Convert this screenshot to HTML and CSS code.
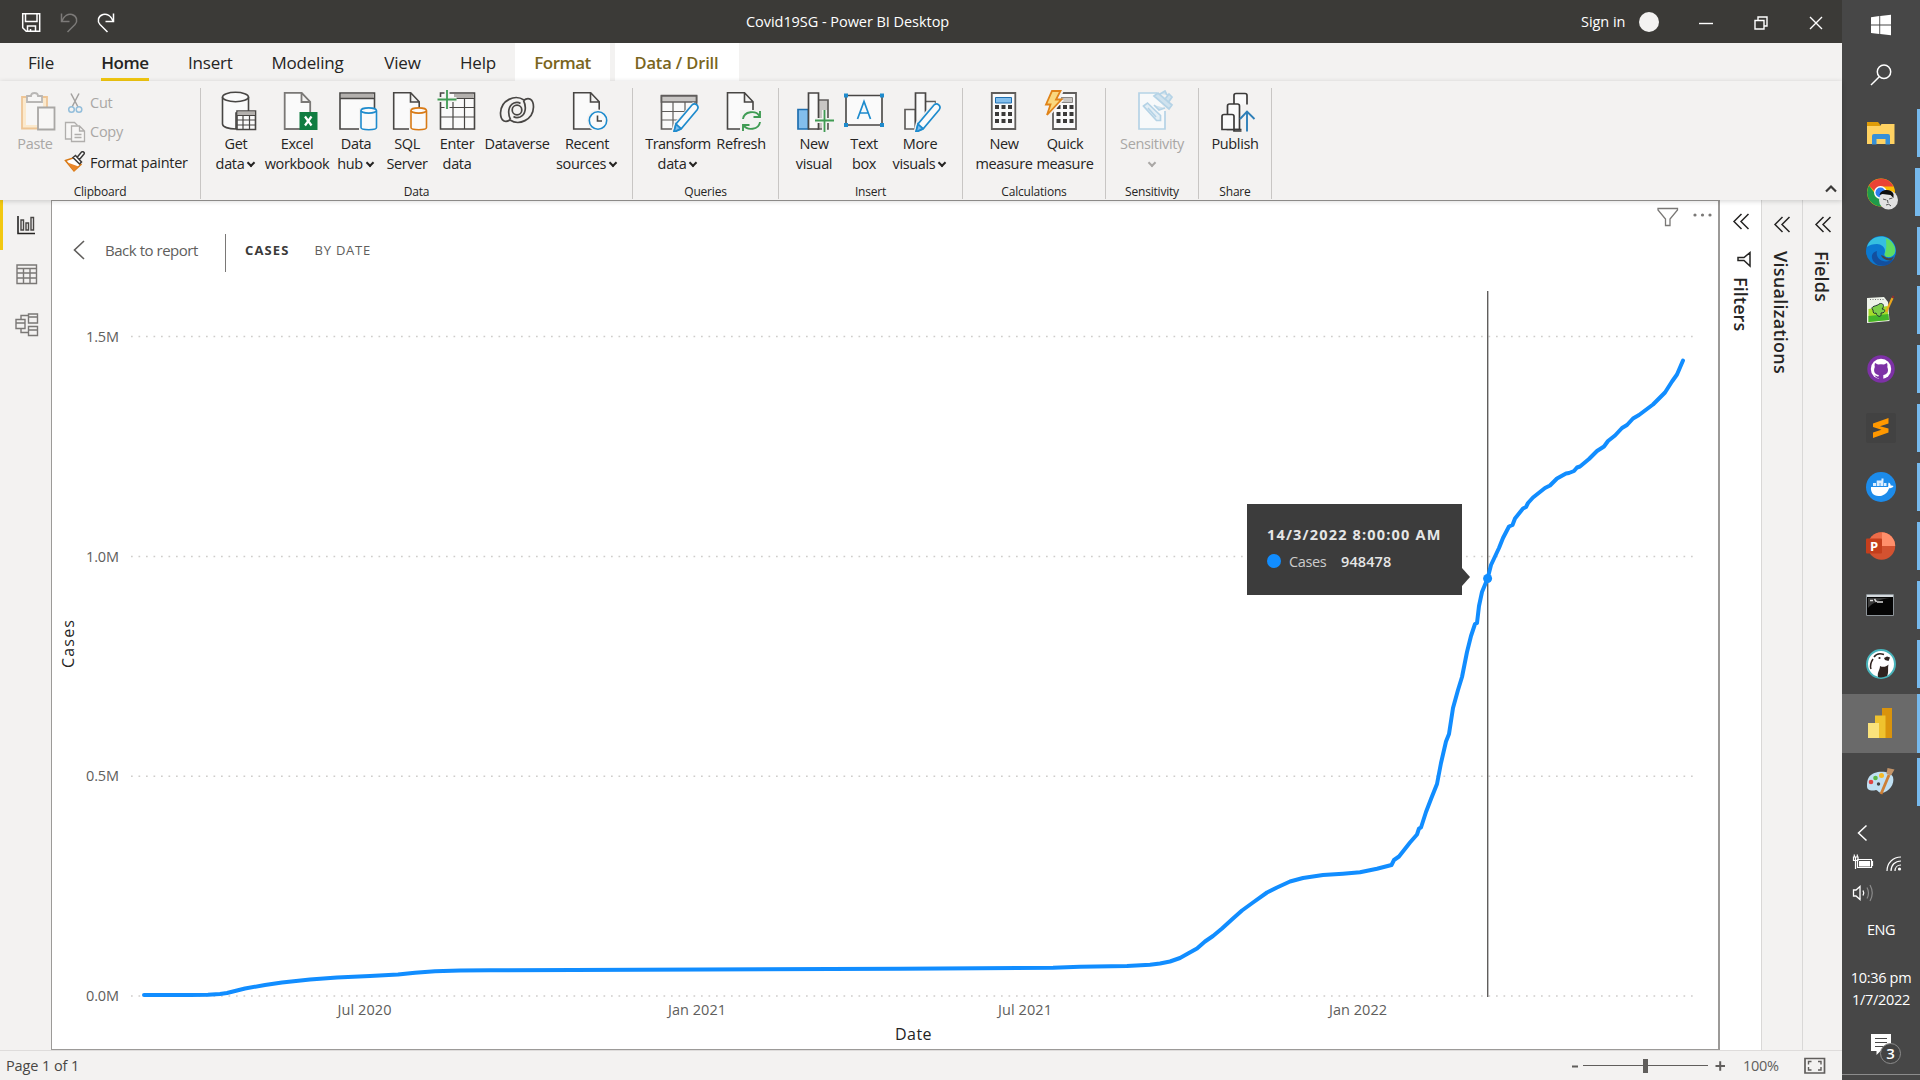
FILE: index.html
```html
<!DOCTYPE html>
<html lang="en">
<head>
<meta charset="utf-8">
<title>Covid19SG - Power BI Desktop</title>
<link rel="stylesheet" href="styles.css">
</head>
<body>
<div class="desktop">
<div class="app">
  <header class="titlebar">
    <svg class="quick" width="120" height="43" viewBox="0 0 120 43" fill="none" stroke="#fff" stroke-width="1.5">
      <path d="M22.7 13.7h17v17.6h-13.500l-3.500-3.500zM25.500 14v7.500h11.500v-7.500M27.500 31v-5h8v5M30.500 31v-2"/>
      <path stroke="#7c7a78" d="M61.500 13.500v8h8M62 21c2-5 6-7.500 10-6.500 5 1.500 6 6.500 3 10l-7.500 7.500"/>
      <path d="M113.500 13.500v8h-8M113 21c-2-5-6-7.500-10-6.500-5 1.500-6 6.500-3 10l7.500 7.500"/>
    </svg>
    <div class="app-title">Covid19SG - Power BI Desktop</div>
    <div class="account"><span>Sign in</span><i class="avatar"></i></div>
    <svg class="winctl" width="142" height="43" viewBox="1700 0 142 43" fill="none" stroke="#fff" stroke-width="1.4">
      <path d="M1699 23.500h14"/><path d="M1755 20.500h9v8.500h-9zM1758 20v-3h9v9h-3"/><path d="M1810 17l12 12M1822 17l-12 12"/>
    </svg>
  </header>

  <nav class="tabs">
    <span class="tab t-file">File</span><span class="tab t-home active">Home</span><span class="tab t-insert">Insert</span><span class="tab t-model">Modeling</span><span class="tab t-view">View</span><span class="tab t-help">Help</span><span class="tab ctx t-format">Format</span><span class="tab ctx t-drill">Data / Drill</span>
  </nav>

  <section class="ribbon">
    <div class="group g-clip">
      <div class="tools">
        <div class="btn w-paste off">
          <svg viewBox="13 90 44 42" fill="none" stroke-width="1.8"><path d="M22 97h25v31.500H22z" fill="#fbe9cd" stroke="#eec595"/><path d="M26 101h17v24H26z" fill="#f7f6f5" stroke="none"/><path d="M27 102v-6h4c0-4 7-4 7 0h4v6z" fill="#f7f6f5" stroke="#b9b7b5"/><path d="M38 107.500h16.500v22H38z" fill="#f7f6f5" stroke="#a9a7a5"/></svg>
          <span>Paste</span>
        </div>
        <div class="list">
          <div class="row off"><svg viewBox="64 92 22 22" fill="none"><path d="M71 93.500l7 13.500M79 93.500l-7 13.500" stroke="#a3a19f" stroke-width="1.5"/><circle cx="71.500" cy="109.500" r="2.800" stroke="#93bedb" stroke-width="1.500"/><circle cx="79" cy="109.500" r="2.800" stroke="#93bedb" stroke-width="1.500"/></svg><span>Cut</span></div>
          <div class="row off"><svg viewBox="64 122 22 22" fill="#f7f6f5" stroke="#b0aeac" stroke-width="1.300"><path d="M73 140h-7.500v-16.500h9l3 3"/><path d="M71.500 127h8l5 5v10.500h-13zM79.500 127v5h5M74.500 135.500h7M74.500 138.500h7"/></svg><span>Copy</span></div>
          <div class="row"><svg viewBox="64 152 22 22" stroke-width="1.500"><path d="M65.500 161.500l9-3 6.500 7-7 6.500z" fill="#fff" stroke="#d87a16"/><path d="M67.500 163.500l11 4-4.500 4.500z" fill="#e8862a" stroke="none"/><path d="M73 158.500l2.500-2 6 6.500-2 2zM77 158.500l4.500-5.500c1.500-1 3.500.5 2.500 2l-5 6" fill="#fff" stroke="#3b3a39"/></svg><span>Format painter</span></div>
        </div>
      </div>
      <div class="caption">Clipboard</div>
    </div>

    <div class="group g-data">
      <div class="tools">
        <div class="btn w52"><svg viewBox="214 90 44 42" fill="#fafafa" stroke="#484644" stroke-width="1.600"><path d="M222.500 97v27c0 3 6 5 13.500 5V113h12.500V97"/><ellipse cx="235.500" cy="97" rx="13" ry="4.700"/><path d="M237 111h18.500v18.500H237z"/><path d="M237.500 111.500h17.500v3.500h-17.500z" fill="#b3b0ad" stroke="none"/><path d="M237 115.500h18.500M237 120h18.500M237 125h18.500M243 115.500v14M249.500 115.500v14" stroke-width="1.200"/></svg><span>Get</span><span>data<i class="car"></i></span></div>
        <div class="btn w70"><svg viewBox="275 90 44 42" fill="#fafafa" stroke="#7a7876" stroke-width="1.800"><path d="M284.700 92.800h17l8.500 9V129h-25.500zM301.500 93v9h8.500"/><path d="M299.500 112h18v18h-18z" fill="#107c41" stroke="none"/><path d="M305 116.500l6.500 9M311.500 116.500l-6.500 9" stroke="#fff" stroke-width="2.200"/></svg><span>Excel</span><span>workbook</span></div>
        <div class="btn w48"><svg viewBox="334 90 44 42" fill="#fafafa" stroke="#484644" stroke-width="1.600"><path d="M340 93h34.500v36H340z"/><path d="M341 94h32.500v4H341z" fill="#b3b0ad" stroke="none"/><path d="M340 98.500h34.500"/><path d="M359 108h20v24h-20z" fill="#f3f2f1" stroke="none"/><path d="M361 110.500v17c0 3 15.500 3 15.500 0v-17" stroke="#1e8bcd"/><ellipse cx="368.700" cy="110.500" rx="7.700" ry="2.600" stroke="#1e8bcd"/></svg><span>Data</span><span>hub<i class="car"></i></span></div>
        <div class="btn w54"><svg viewBox="385 90 44 42" fill="#fafafa" stroke="#484644" stroke-width="1.600"><path d="M393.700 92.800h17l8.500 9V129h-25.500zM410.500 93v9h8.500"/><path d="M409 108h20v24h-20z" fill="#f3f2f1" stroke="none"/><path d="M411 110.500v17c0 3 15.500 3 15.500 0v-17" stroke="#d87a16"/><ellipse cx="418.700" cy="110.500" rx="7.700" ry="2.600" stroke="#d87a16"/></svg><span>SQL</span><span>Server</span></div>
        <div class="btn w46"><svg viewBox="435 90 44 42" fill="#fafafa" stroke="#484644" stroke-width="1.600"><path d="M440.500 93h34v36h-34z"/><path d="M454 94h19.500v4H454z" fill="#b3b0ad" stroke="none"/><path d="M440.500 107.500h34M440.500 117h34M453 99v30M464.500 99v30M453 98.500h21.500" stroke-width="1.200"/><path d="M447 90v19M437.500 99.500h19" stroke="#f3f2f1" stroke-width="5"/><path d="M447 90v19M437.500 99.500h19" stroke="#3f9b53" stroke-width="1.800"/></svg><span>Enter</span><span>data</span></div>
        <div class="btn w74"><svg viewBox="495 90 44 42" fill="none" stroke="#484644" stroke-width="1.700"><circle cx="517" cy="110" r="4.800"/><path d="M524 100c-9-6-23 0-23.500 13 0 8 5 10.500 10 6.500M510 120c9 6 23 0 23.500-13 0-8-5-10.500-10-6.500"/><path d="M510.500 119.500c-3-6-2.500-14 3.500-16.500 3-1 5-.5 6.500.5M523.500 100.500c3 6 2.500 14-3.500 16.500-3 1-5 .5-6.500-.5"/></svg><span>Dataverse</span></div>
        <div class="btn w66"><svg viewBox="565 90 44 42" fill="#fafafa" stroke="#484644" stroke-width="1.600"><path d="M573.700 92.800h17l8.500 9V129h-25.500zM590.500 93v9h8.500"/><circle cx="598" cy="120.500" r="11" fill="#f3f2f1" stroke="none"/><circle cx="598" cy="120.500" r="8.700" stroke="#1e8bcd"/><path d="M597.500 115.500v5.500h4.500"/></svg><span>Recent</span><span>sources<i class="car"></i></span></div>
      </div>
      <div class="caption">Data</div>
    </div>

    <div class="group g-query">
      <div class="tools">
        <div class="btn w72 tight"><svg viewBox="656 90 44 42" fill="#fafafa" stroke="#605e5c" stroke-width="1.700"><path d="M661.500 96.500h35V130h-35z" transform="translate(0 -1)"/><path d="M661.500 96h35v6h-35z" fill="#c8c6c4"/><path d="M661.500 111.500h35M661.500 120h35M673 102v27M685 102v27" stroke-width="1.200"/><path d="M670 135l4-12 19-21 8 6v24z" fill="#f3f2f1" stroke="none"/><path d="M674 132l2-8 16-19c3-3 8 1 5 5l-16 19z" stroke="#1e8bcd"/><path d="M674 132l2-8 5 4.500z" fill="#83beec" stroke="#1e8bcd"/></svg><span>Transform</span><span>data<i class="car"></i></span></div>
        <div class="btn w54"><svg viewBox="719 90 44 42" fill="#fafafa" stroke="#484644" stroke-width="1.600"><path d="M727.500 92.800h17l8.500 9V129h-25.500zM744.500 93v9h8.500"/><path d="M740 110h23v22h-23z" fill="#f3f2f1" stroke="none"/><path d="M743 119c1-8 13-9 16.500-3M760 111v6h-6.500M760 122c-1 8-13 9-16.500 3M743 131v-6h6.500" fill="none" stroke="#3f9b53" stroke-width="1.900"/></svg><span>Refresh</span></div>
      </div>
      <div class="caption">Queries</div>
    </div>

    <div class="group g-insert">
      <div class="tools">
        <div class="btn w50"><svg viewBox="792 90 44 42" fill="#fafafa" stroke="#605e5c" stroke-width="1.700"><path d="M818 100h10v29h-10z" fill="#c8c6c4"/><path d="M798 109.500h10.500V129H798z" fill="#83beec" stroke="#1e6fb0"/><path d="M808.500 93h10v36h-10z" stroke="#484644"/><path d="M824.500 110v22M815 120.500h19" stroke="#f3f2f1" stroke-width="5"/><path d="M824.500 110v22M815 120.500h19" stroke="#3f9b53" stroke-width="1.800"/></svg><span>New</span><span>visual</span></div>
        <div class="btn w50"><svg viewBox="842 90 44 42" fill="#fafafa" stroke="#484644" stroke-width="1.600"><path d="M846 95.500h36v29.500h-36z"/><path d="M844 93.500h4v4h-4zM880 93.500h4v4h-4zM844 123h4v4h-4zM880 123h4v4h-4z" fill="#1e8bcd" stroke="none"/><path d="M857.500 119l6.500-17.500 6.500 17.500M859.500 113h9" fill="none" stroke="#1e8bcd" stroke-width="1.700"/></svg><span>Text</span><span>box</span></div>
        <div class="btn w62"><svg viewBox="898 90 44 42" fill="#fafafa" stroke="#605e5c" stroke-width="1.700"><path d="M925 101.500h10V129h-10z"/><path d="M905 109.500h10.500V129H905z"/><path d="M915.500 93h10v36h-10z" stroke="#484644"/><path d="M913 134l3-12 18-20 8 6v24z" fill="#f3f2f1" stroke="none"/><path d="M916 132l2-8 16-19c3-3 8 1 5 5l-16 19z" stroke="#1e8bcd"/><path d="M916 132l2-8 5 4.500z" fill="#83beec" stroke="#1e8bcd"/></svg><span>More</span><span>visuals<i class="car"></i></span></div>
      </div>
      <div class="caption">Insert</div>
    </div>

    <div class="group g-calc">
      <div class="tools">
        <div class="btn w62"><svg viewBox="982 90 44 42" fill="#fafafa" stroke="#605e5c" stroke-width="1.800"><path d="M991.800 93h23.500v36h-23.500z"/><path d="M995.500 97.500h16v5.500h-16z" fill="#83beec" stroke="#1e6fb0" stroke-width="1"/><path d="M995 107h17M995 114h17M995 121h17" stroke="#3b3a39" stroke-width="4" stroke-dasharray="4 2.500"/></svg><span>New</span><span>measure</span></div>
        <div class="btn w60"><svg viewBox="1043 90 44 42" fill="#fafafa" stroke="#605e5c" stroke-width="1.800"><path d="M1053 93h23v36h-23z"/><path d="M1061 97.500h11.500v5h-11.500z" fill="#c8c6c4" stroke="#8a8886" stroke-width="1"/><path d="M1056.500 107h17M1056.500 114h17M1056.500 121h17" stroke="#3b3a39" stroke-width="4" stroke-dasharray="4 2.500"/><path d="M1051 90h13l-4 10h4l-15 17h-5v-30z" fill="#f3f2f1" stroke="none"/><path d="M1052 91h8.500l-4.500 8.500h5.500L1047 115l3.500-10.500H1046z" fill="#fad87e" stroke="#e08318"/></svg><span>Quick</span><span>measure</span></div>
      </div>
      <div class="caption">Calculations</div>
    </div>

    <div class="group g-sens">
      <div class="tools">
        <div class="btn w72 off"><svg viewBox="1130 90 44 42" fill="#f7f9fa" stroke="#b5d3e6" stroke-width="1.700"><path d="M1157 93h-18v36h26v-18"/><path d="M1143.500 106l4-3 13 12.500v5h-4z" fill="#e3eef5"/><path d="M1148 108l8 9" /><path d="M1154 96l4-3 14 12-3 4zM1160 94l5-3 2 4M1165 99l4-5 3 3-4 6M1154 105l5 5 6-2" fill="#cfe2ee"/></svg><span>Sensitivity</span><span><i class="car"></i></span></div>
      </div>
      <div class="caption">Sensitivity</div>
    </div>

    <div class="group g-share">
      <div class="tools">
        <div class="btn w52"><svg viewBox="1213 89 44 42" fill="#fafafa" stroke="#3b3a39" stroke-width="1.700"><path d="M1234 104v-9.500q0-2 2-2h9q2 0 2 2v35.500h-13z" stroke-width="1.700"/><path d="M1227.500 113v-8q0-2 2-2h8q2 0 2 2v23.500h-12z"/><path d="M1222 128.500v-13q0-2 2-2h8q2 0 2 2v13zM1234 128.500h9"/><path d="M1241.500 131v-27.500h14v27.500z" fill="#f3f2f1" stroke="none"/><path d="M1247 130.500v-18.500M1240 118l7-7.500 7.500 7.500" fill="none" stroke="#2e7fb8" stroke-width="1.900"/></svg><span>Publish</span></div>
      </div>
      <div class="caption">Share</div>
    </div>
    <svg class="collapse" width="14" height="9" viewBox="0 0 14 9" fill="none" stroke="#3b3a39" stroke-width="2.200"><path d="M2 7.500l5-5 5 5"/></svg>
  </section>

  <main class="workspace">
    <aside class="rail">
      <svg width="51" height="150" viewBox="0 200 51 150" fill="none" stroke="#7a7876" stroke-width="1.400">
        <path d="M18 216v17.500h17" stroke="#252423" stroke-width="1.600"/><path d="M21 220h2.500v10H21zM26 223h2.500v7H26zM31 217.500h2.500V230H31z" stroke="#484644"/>
        <path d="M17 265h19.500v18.500H17zM17 268.500h19.500M17 273h19.500M17 278h19.500M23.500 268v15M30 268v15"/>
        <path d="M16 319.500h9v9h-9zM16 323h9M28.500 314h9v9h-9zM28.500 317h9M28.500 326.500h9v9h-9zM28.500 330h9M21 319v-3.500h7.500M21 329v3.500h7.500"/>
      </svg>
    </aside>

    <section class="canvas">
      <div class="drillbar">
        <svg class="back" width="12" height="20" viewBox="0 0 12 20" fill="none" stroke="#605e5c" stroke-width="1.600"><path d="M11 1L1.500 10 11 19"/></svg>
        <span class="back-label">Back to report</span>
        <i class="bar"></i>
        <span class="measure">CASES</span>
        <span class="by">BY DATE</span>
        <svg class="visual-tools" width="60" height="22" viewBox="1655 207 60 22" fill="none" stroke="#7a7876" stroke-width="1.300"><path d="M1658 209.500h19.500v1.500l-7.500 9v6.500h-4.500V220l-7.500-9z"/><g fill="#7a7876" stroke="none"><circle cx="1695" cy="216" r="1.600"/><circle cx="1702.500" cy="216" r="1.600"/><circle cx="1710" cy="216" r="1.600"/></g></svg>
      </div>
      <div class="chart">
        <svg width="1666" height="764" viewBox="52 284 1666 764">
          <path class="grid" d="M131 336.500H1694M131 556.500H1694M131 776.200H1694M131 996H1694"/>
          <g class="ticks">
            <text x="86" y="342" textLength="33">1.5M</text><text x="86" y="561.500" textLength="33">1.0M</text><text x="86" y="781" textLength="33">0.5M</text><text x="86" y="1001" textLength="33">0.0M</text>
            <text x="337.500" y="1015" textLength="54">Jul 2020</text><text x="668" y="1015" textLength="58">Jan 2021</text><text x="998" y="1015" textLength="54">Jul 2021</text><text x="1329" y="1015" textLength="58">Jan 2022</text>
          </g>
          <text class="axis" x="895" y="1040" textLength="36.500">Date</text>
          <text class="axis" transform="translate(74 668) rotate(-90)" textLength="48">Cases</text>
          <path d="M1487.700 291V997" stroke="#605e5c" stroke-width="1.400"/>
          <path class="series" d="M144 995L190 995 208 994.700 220 993.900 227 993 235 991 245 988.500 265 985 282 982.500 310 979.500 337 977.500 370 976 398 974.500 415 972.800 435 971.200 460 970.600 490 970.200 704 969.500 900 968.700 1053 967.700 1080 966.800 1127 966 1150 964.700 1160 963.500 1170 961.500 1180 958 1188 953.500 1197 948.500 1205 941.500 1213 936 1222 928.500 1233 918.500 1242 910.500 1253 902.500 1267 892.500 1277 887.500 1290 881.500 1303 878 1323 875 1343 873.700 1360 872.300 1377 868.800 1391.500 865 1394 860 1399 856.500 1410 842.500 1417 834.500 1419 828.500 1421 827.500 1426 812 1431 799 1437 784 1441 763 1446 741.500 1449 734 1453 708 1458 690 1462 677 1467 652 1471 636 1475 624 1477 623 1479 606 1482 592 1487.600 578.500 1491 565 1499 548 1503 538 1509 526.500 1512.500 525 1515 518.500 1523 508.500 1526 507 1528 503 1533 497.500 1545 488 1550 485.500 1557 478.500 1566 473.500 1569 473 1574 471 1577 467.500 1580 466.500 1589 459 1597 451 1604 446.500 1608 441 1615 435.500 1622 428 1627 425 1633 418.500 1639 415 1653 404.500 1665 392.500 1672 381.500 1677 374.500 1683 360.500"/>
          <circle cx="1487.600" cy="578.500" r="4.500" fill="#118dff"/>
        </svg>
        <div class="tooltip">
          <div class="tip-title">14/3/2022 8:00:00 AM</div>
          <div class="tip-row"><i></i><span>Cases</span><b>948478</b></div>
        </div>
      </div>
    </section>

    <aside class="pane filters">
      <svg width="41" height="77" viewBox="1720 200 41 77" fill="none" stroke="#252423" stroke-width="1.500"><path d="M1741.500 214l-7.500 7.500 7.500 7.500M1748.500 214l-7.500 7.500 7.500 7.500"/><path d="M1750 252.500v13.500l-6-5.500h-6v-3h6z"/></svg>
      <span>Filters</span>
    </aside>
    <aside class="pane vis">
      <svg width="40" height="51" viewBox="1762 200 40 51" fill="none" stroke="#252423" stroke-width="1.500"><path d="M1782.500 217l-7.500 7.500 7.500 7.500M1789.500 217l-7.500 7.500 7.500 7.500"/></svg>
      <span>Visualizations</span>
    </aside>
    <aside class="pane fields">
      <svg width="39" height="51" viewBox="1803 200 39 51" fill="none" stroke="#252423" stroke-width="1.500"><path d="M1823.500 217l-7.500 7.500 7.500 7.500M1830.500 217l-7.500 7.500 7.500 7.500"/></svg>
      <span>Fields</span>
    </aside>
  </main>

  <footer class="status">
    <span class="page">Page 1 of 1</span>
    <svg width="160" height="29" viewBox="1570 1051 160 29" fill="none" stroke="#605e5c"><path d="M1572 1066.500h6M1715.500 1066h9.500M1720.200 1061.200v9.500" stroke-width="2"/><path d="M1583 1065.500h125" stroke-width="1.200"/><path d="M1643 1059h5v14h-5z" fill="#605e5c" stroke="none"/></svg>
    <span class="zoom">100%</span>
    <svg class="fit" width="22" height="18" viewBox="0 0 22 18" fill="none" stroke="#605e5c" stroke-width="1.700"><path d="M1 1.500h19.500v14.500H1z"/><path d="M7.500 4.500h-3v3M14 4.500h3v3M7.500 13h-3v-3M14 13h3v-3" stroke-width="1.400"/></svg>
  </footer>
</div>

<aside class="taskbar">
  <div class="slot start"><svg viewBox="0 0 30 30" fill="#fff"><path d="M5 7.200l8.300-1.100v8.500H5zM14.200 6L25 4.700v9.900H14.200zM5 15.500h8.300V24L5 22.900zM14.200 15.500H25v9.800L14.200 24z"/></svg></div>
  <div class="slot search"><svg viewBox="0 0 30 30" fill="none" stroke="#fff" stroke-width="1.500"><circle cx="18" cy="11.700" r="6.700"/><path d="M13.300 16.700L5 25"/></svg></div>
  <div class="slot run"><svg viewBox="0 0 30 30"><path d="M1 4h11l2 2.500V10H1z" fill="#df9c08"/><path d="M1 8h13l1.500-2H28.500v20H1z" fill="#ffd262"/><path d="M6 26.500V18q0-2 2-2h14q2 0 2 2v8.500h-4.500V21h-9v5.500z" fill="#3790d8"/></svg></div>
  <div class="slot run wide"><svg viewBox="0 0 32 32"><circle cx="15" cy="14.500" r="14" fill="#fbbc05"/><path d="M3 7.500a14 14 0 0 1 24.500 1H15a6 6 0 0 0-6 5z" fill="#ea4335"/><path d="M3 7.500a14 14 0 0 0 12 21l4-7-7-2z" fill="#1f9a4b"/><circle cx="14.500" cy="14.500" r="6.500" fill="#fff"/><circle cx="14.500" cy="14.500" r="5" fill="#2f7df0"/><circle cx="22.500" cy="22" r="9.500" fill="#e2e2e2"/><path d="M13.500 17c1-6 12-7 14-1l0 4-3-3-8-1z" fill="#0d0d0d"/><path d="M17 21l3.500 1M23 21l3.500-1M20 27q3-2 5 1M21.500 22l.5 3" stroke="#555" fill="none"/></svg></div>
  <div class="slot run"><svg viewBox="0 0 30 30"><circle cx="15" cy="15" r="15" fill="#0b78d0"/><path d="M1 11C4-1 22-4 28 9c4 8-1 13-7 12-4-1-2-3-2-6 0-4-4-7-8-7S3 9 1 11z" fill="#35bfe0"/><path d="M20 2c11 5 12 18 3 19-4 0-5-2-4-4 2-6 1-10 1-15z" fill="#5fdc62"/><path d="M11 15c-2 8 7 14 17 8-5 8-15 9-20 3-4-5-2-10 3-11z" fill="#134f9e"/><path d="M20 21.500c2 1 5 1 8-1-1 2-2 3-3 4-4 0-8-1-10-5 1-1 3 1 5 2z" fill="#464646"/></svg></div>
  <div class="slot run"><svg viewBox="0 0 30 30"><path d="M1 3l17-1 4 5 1.500 19L1 28z" fill="#eef3ea"/><path d="M2.500 14l19-3 1 14-20 2z" fill="#a5dc2a"/><path d="M2.500 21l20-2 .5 6-20.500 2z" fill="#43b52a"/><path d="M7 15c-4-4 5-4 6-6 4-2 6 2 3 5 4 0 4 4-1 4 1 5-4 4-5 0-2 1-3 0-3-3z" fill="#7ccf4b" stroke="#233" stroke-width="1"/><path d="M4 4.500h15" stroke="#777" stroke-dasharray="1 1.500"/><path d="M26.500 3L20 17" stroke="#eba61d" stroke-width="2.200"/><path d="M26.500 3l1-2" stroke="#932f2f" stroke-width="2"/></svg></div>
  <div class="slot run"><svg viewBox="0 0 30 30"><circle cx="15" cy="15" r="13.700" fill="#7d31a6"/><circle cx="15" cy="15" r="10.200" fill="#fff"/><path d="M9 9l3 1.500q3-.7 6 0L21 9q.8 2 .3 4c2 5-.5 7.500-4 8v5h-4.600v-2c-3 0-3-2-4.500-2.500 2-.5 2.500 1 4.300 1l.3-1.500c-3.500-.5-6-3-4-8Q8.200 11 9 9z" fill="#7d31a6"/></svg></div>
  <div class="slot run"><svg viewBox="0 0 30 30"><rect width="30" height="30" rx="2" fill="#424242"/><path d="M7 10.500L22.500 5v5.500L14 13.200l8.500 2.300v4L7 25v-5.500l8.500-2.700L7 14z" fill="#ff9800"/></svg></div>
  <div class="slot run"><svg viewBox="0 0 30 30"><circle cx="15" cy="15" r="15" fill="#1c8bea"/><path d="M5 15h17c1-1-.5-3 .8-4.500 1.500 1 2 2 1.800 3 1.500-.3 2.500.2 3 .5-1 2-3 2.200-4.500 2.200C21 22 17 24 12.500 24 7 24 4.500 20 5 15z" fill="#fff"/><path d="M7 11h3v3H7zM10.700 11h3v3h-3zM14.400 11h3v3h-3zM18 11h2.500v3H18zM10.700 8.500h6.700V11h-6.700zM15.500 6.500h2v2h-2z" fill="#dceeff"/></svg></div>
  <div class="slot run"><svg viewBox="0 0 30 30"><circle cx="15.500" cy="15" r="13.700" fill="#d35230"/><path d="M15.500 1.300A13.700 13.700 0 0 1 29.200 15H15.500z" fill="#ff8f6b"/><path d="M15.500 1.300V15H1.800A13.700 13.700 0 0 1 15.500 1.300z" fill="#ec6c49"/><rect y="7.500" width="16" height="15" rx="1" fill="#c43e1c"/><text x="4" y="19.500" class="ppt">P</text></svg></div>
  <div class="slot run"><svg viewBox="0 0 30 30"><path d="M.5 4.500h27v21H.5z" fill="#050505" stroke="#8d9499"/><path d="M1 5h26v2H1z" fill="#d5dade"/><path d="M2 8h22C14 9 6 13 2 18z" fill="#3a3a3a"/><path d="M4 10.500h3M8.500 9l2 3M11 12h6" stroke="#ddd" stroke-width="1.400"/></svg></div>
  <div class="slot run"><svg viewBox="0 0 30 30"><circle cx="15" cy="15" r="14" fill="#fff" stroke="#48b4bb" stroke-width="2"/><path d="M8 8C10 5 14 4 18 5.500M7 10c-2 3-3 7-2 10" fill="none" stroke="#302420" stroke-width="1.500"/><path d="M18 9l3-1.500 3 1-1.500 3.500-3.500-1z" fill="#302420"/><path d="M12 28c-1-5 2-7 2-11 3 1.500 6 1 8.500-1.500-1 4 .5 8-1.500 11.500-3 1.500-6 2-9 1z" fill="#302420"/><circle cx="13.500" cy="9" r="1.100" fill="#302420"/></svg></div>
  <div class="slot run current"><svg viewBox="0 0 30 30"><path d="M16 0h10v30H16z" fill="#d9930c"/><path d="M9 7.500h10.500V30H9z" fill="#efc22e"/><path d="M2 15h11v15H2z" fill="#fae27c"/></svg></div>
  <div class="slot run"><svg viewBox="0 0 30 30"><path d="M3 10C8 3 24 3 27 10c2 7-4 15-11 16-4 0-4-3-6-3-4 1-9 1-9-4 0-3 0-6 2-9z" fill="#c0e0f3"/><circle cx="5" cy="15" r="2.300" fill="#e04545"/><circle cx="9.500" cy="11" r="2.300" fill="#5bb947"/><circle cx="15.500" cy="8.500" r="2.500" fill="#f6bb27"/><circle cx="12.500" cy="17" r="1.700" fill="#444"/><path d="M23 8L15 27" stroke="#cd7f35" stroke-width="2.800"/><path d="M21.500 1l7 1.500-3.500 6-4.500-1.500z" fill="#c39468"/></svg></div>
  <div class="tray">
    <svg width="78" height="94" viewBox="1842 812 78 94" fill="none" stroke="#fff" stroke-width="1.500">
      <path d="M1866.500 825.500l-8 7.500 8 7.500"/>
      <path d="M1857.500 859.500h14v8h-14zM1872.500 861v5M1855.500 857v12M1853.500 857h4.500v3.500h-4.500zM1854.300 854.500v2M1857.300 854.500v2" stroke-width="1.200"/><path d="M1859 861h11v5.500h-11z" fill="#fff" stroke="none"/>
      <path d="M1887 871c0-8 6-14 14-14M1891 871c0-6 4-10 10-10M1895 871c0-3 2-6 6-6" stroke-width="1.200"/><circle cx="1899.500" cy="869" r="1.600" fill="#fff" stroke="none"/>
      <path d="M1853.500 890h2.500l4-3.500v13l-4-3.500h-2.500zM1863 890.500q1.500 2.500 0 5" stroke-width="1.300"/><path d="M1867 887.500q3 5.500 0 11M1870 885q4.500 8 0 16" stroke="#8b8b8b" stroke-width="1.200"/>
    </svg>
    <div class="lang">ENG</div>
    <div class="clock">10:36 pm</div>
    <div class="clock">1/7/2022</div>
    <svg class="notif" width="78" height="50" viewBox="1842 1030 78 50"><path d="M1871 1034h20v17h-10.500l-4 4v-4h-5.500z" fill="#fff"/><path d="M1875 1038.500h12M1875 1042.500h12M1875 1046.500h9" stroke="#484848"/><circle cx="1890.500" cy="1053.500" r="10" fill="#434343" stroke="#8c8c8c"/><text class="count" x="1890.500" y="1059" text-anchor="middle">3</text><path d="M1842 1074.500h78" stroke="#8c8c8c"/></svg>
  </div>
</aside>
</div>
</body>
</html>
```
FILE: styles.css
```css
* { box-sizing: border-box; }
html, body { margin: 0; height: 100%; overflow: hidden; }
body { font-family: "Open Sans", "Noto Sans", sans-serif; font-size: 15px; color: #252423; background: #f3f2f1; }
svg { display: block; flex: none; }

.desktop { display: flex; width: 1920px; height: 1080px; }
.app { display: flex; flex-direction: column; width: 1842px; height: 1080px; }

/* title bar */
.titlebar { display: flex; align-items: center; height: 43px; background: #3b3a37; color: #fff; font-size: 14.5px; letter-spacing: -.05px; }
.quick { margin-right: 626px; }
.app-title { width: 835px; white-space: nowrap; }
.account { display: flex; align-items: center; gap: 13px; width: 119px; white-space: nowrap; }
.account span { width: 45px; }
.avatar { width: 20px; height: 20px; border-radius: 50%; background: #f3f2f1; }
.winctl { overflow: visible; }

/* ribbon tabs */
.tabs { display: flex; height: 38px; font-size: 17px; letter-spacing: -.2px; line-height: 40px; }
.tab { height: 38px; text-align: center; white-space: nowrap; }
.t-file { width: 82px; }
.t-home { width: 48px; margin-left: 19px; }
.t-insert { width: 44px; margin-left: 39px; }
.t-model { width: 73px; margin-left: 39px; }
.t-view { width: 37px; margin-left: 40px; }
.t-help { width: 36px; margin-left: 39px; }
.t-format { width: 95px; margin-left: 19px; }
.t-drill { width: 124px; margin-left: 5px; }
.active { font-weight: 600; letter-spacing: -.4px; box-shadow: inset 0 -3px #f2c811; }
.ctx { background: #fff; color: #7a6520; font-weight: 600; letter-spacing: -.5px; }
.t-drill { letter-spacing: -.15px; font-size: 16.5px; padding-right: 1px; }

/* ribbon body */
.ribbon { display: flex; position: relative; z-index: 2; height: 119px; padding-top: 7px; background: #f3f2f1; box-shadow: 0 1px 5px rgba(0,0,0,.18); }
.group { display: flex; flex-direction: column; height: 111px; border-right: 1px solid #c8c6c4; }
.tools { display: flex; height: 93px; padding-top: 2px; }
.caption { font-size: 12px; letter-spacing: -.2px; line-height: 22px; height: 18px; text-align: center; }
.g-clip { width: 201px; }
.g-data { width: 432px; } .g-data .tools { padding-left: 9px; }
.g-query { width: 146px; } .g-query .tools { padding-left: 9px; }
.g-insert { width: 184px; } .g-insert .tools { padding-left: 10px; }
.g-calc { width: 143px; } .g-calc .tools { padding-left: 10px; }
.g-sens { width: 93px; } .g-sens .tools { padding-left: 10px; }
.g-share { width: 73px; } .g-share .tools { padding-left: 10px; }
.btn { display: flex; flex-direction: column; align-items: center; font-size: 14.5px; letter-spacing: -.35px; line-height: 20px; white-space: nowrap; }
.btn svg { width: 44px; height: 42px; margin-bottom: 2px; }
.btn span { height: 20px; }
.tight span:first-of-type { letter-spacing: -.6px; }
.w-paste { width: 52px; margin-left: 9px; }
.w46 { width: 46px; } .w48 { width: 48px; } .w50 { width: 50px; } .w52 { width: 52px; }
.w54 { width: 54px; } .w60 { width: 60px; } .w62 { width: 62px; } .w66 { width: 66px; }
.w70 { width: 70px; } .w72 { width: 72px; } .w74 { width: 74px; }
.off { color: #a9a7a5; }
.car { display: inline-block; width: 6px; height: 6px; margin: 0 2px 3px 4px; border: solid #252423; border-width: 0 2.200px 2.200px 0; border-right-width: 2px; border-bottom-width: 2px; transform: rotate(45deg); }
.off .car { border-color: #a9a7a5; margin-left: 1px; }
.list { display: flex; flex-direction: column; margin-left: 3px; }
.row { display: flex; align-items: center; gap: 4px; height: 30px; font-size: 14.5px; letter-spacing: -.25px; white-space: nowrap; }
.row:first-child { height: 25px; }
.row:nth-child(2) { height: 32px; padding-top: 1px; }
.row svg { width: 22px; height: 22px; }
.collapse { margin: 96px 4px 0 auto; }

/* workspace */
.workspace { display: flex; height: 850px; }
.rail { width: 51px; background: linear-gradient(#f2c811, #f2c811) 0 0 / 3px 50px no-repeat; }
.canvas { width: 1669px; height: 850px; border: 1px solid #9c9a98; border-right-width: 2px; background: #fff; }
.drillbar { display: flex; align-items: center; height: 83px; padding: 0 3px 0 21px; color: #605e5c; }
.back, .back-label, .measure, .by { margin-top: 15px; }
.back-label { width: 93px; margin-left: 20px; letter-spacing: -.47px; white-space: nowrap; }
.bar { width: 1px; height: 38px; margin: 20px 0 0 27px; background: #7a7876; }
.measure { margin-left: 19px; color: #3b3a39; font-size: 13px; font-weight: 700; letter-spacing: 1.150px; }
.by { margin-left: 25px; font-size: 13px; letter-spacing: .75px; }
.visual-tools { margin: -51px 0 0 auto; }
.chart { position: relative; height: 764px; }
.grid { fill: none; stroke: #cfcdcb; stroke-width: 1.600; stroke-dasharray: 1.700 5.800; }
.series { fill: none; stroke: #118dff; stroke-width: 4; stroke-linejoin: round; stroke-linecap: round; }
.ticks { font-size: 14.5px; fill: #605e5c; }
.axis { font-size: 16px; fill: #252423; font-weight: 500; }
.tooltip { position: absolute; left: 1195px; top: 220px; width: 215px; height: 91px; padding: 20px; background: #3c3c3c; color: #e6e6e6; white-space: nowrap; }
.tooltip::after { content: ""; position: absolute; left: 215px; top: 64px; border: solid transparent; border-width: 9px 0 9px 8px; border-left-color: #3c3c3c; }
.tip-title { font-size: 14.5px; font-weight: 700; letter-spacing: 1.180px; line-height: 22px; }
.tip-row { display: flex; align-items: center; margin-top: 5px; font-size: 14.5px; line-height: 22px; letter-spacing: -.35px; }
.tip-row i { width: 14px; height: 14px; margin: -2px 8px 0 0; border-radius: 50%; background: #118dff; }
.tip-row span { width: 52px; color: #ccc; }
.tip-row b { font-weight: 600; letter-spacing: .1px; }

/* collapsed panes */
.pane { display: flex; flex-direction: column; width: 41px; font-size: 18px; font-weight: 600; }
.pane span { width: 41px; writing-mode: vertical-rl; line-height: 41px; letter-spacing: .1px; white-space: nowrap; }
.filters { background: #fff; }
.vis { border-left: 1px solid #d9d8d7; }
.vis span { line-height: 37px; width: 37px; letter-spacing: .27px; }
.fields { border-left: 1px solid #d9d8d7; }
.fields span { line-height: 37px; width: 37px; letter-spacing: .2px; }

/* status bar */
.status { display: flex; align-items: center; height: 30px; border-top: 1px solid #dedcdb; color: #484644; font-size: 14.5px; letter-spacing: -.1px; }
.page { width: 1564px; margin-left: 6px; }
.zoom { width: 36px; margin-left: 13px; color: #605e5c; letter-spacing: -.3px; }
.fit { margin-left: 25px; }

/* taskbar */
.taskbar { display: flex; flex-direction: column; width: 78px; height: 1080px; background: #474747; color: #fff; }
.slot { display: flex; justify-content: center; align-items: center; height: 59px; }
.slot svg { width: 30px; height: 30px; }
.start { height: 50px; }
.search { height: 54px; padding-bottom: 4px; }
.run { padding-bottom: 2px; background: linear-gradient(#76b9ed, #76b9ed) 100% 5px / 3px 48px no-repeat; }
.wide { padding: 2px 0 0 2px; background-size: 5px 48px; }
.wide svg { width: 32px; height: 32px; }
.current { background-color: #6a6a6a; background-position: 100% 0; background-size: 3px 59px; }
.ppt { font: 700 13px "Open Sans", sans-serif; fill: #fff; }
.tray { display: flex; flex-direction: column; }
.lang { margin-top: 13px; font-size: 14.5px; line-height: 22px; text-align: center; letter-spacing: -.5px; }
.clock { font-size: 14.5px; line-height: 22px; text-align: center; letter-spacing: -.3px; }
.lang + .clock { margin-top: 26px; }
.notif { margin-top: 19px; }
.count { font: 600 15px "Open Sans", sans-serif; fill: #fff; }
```
